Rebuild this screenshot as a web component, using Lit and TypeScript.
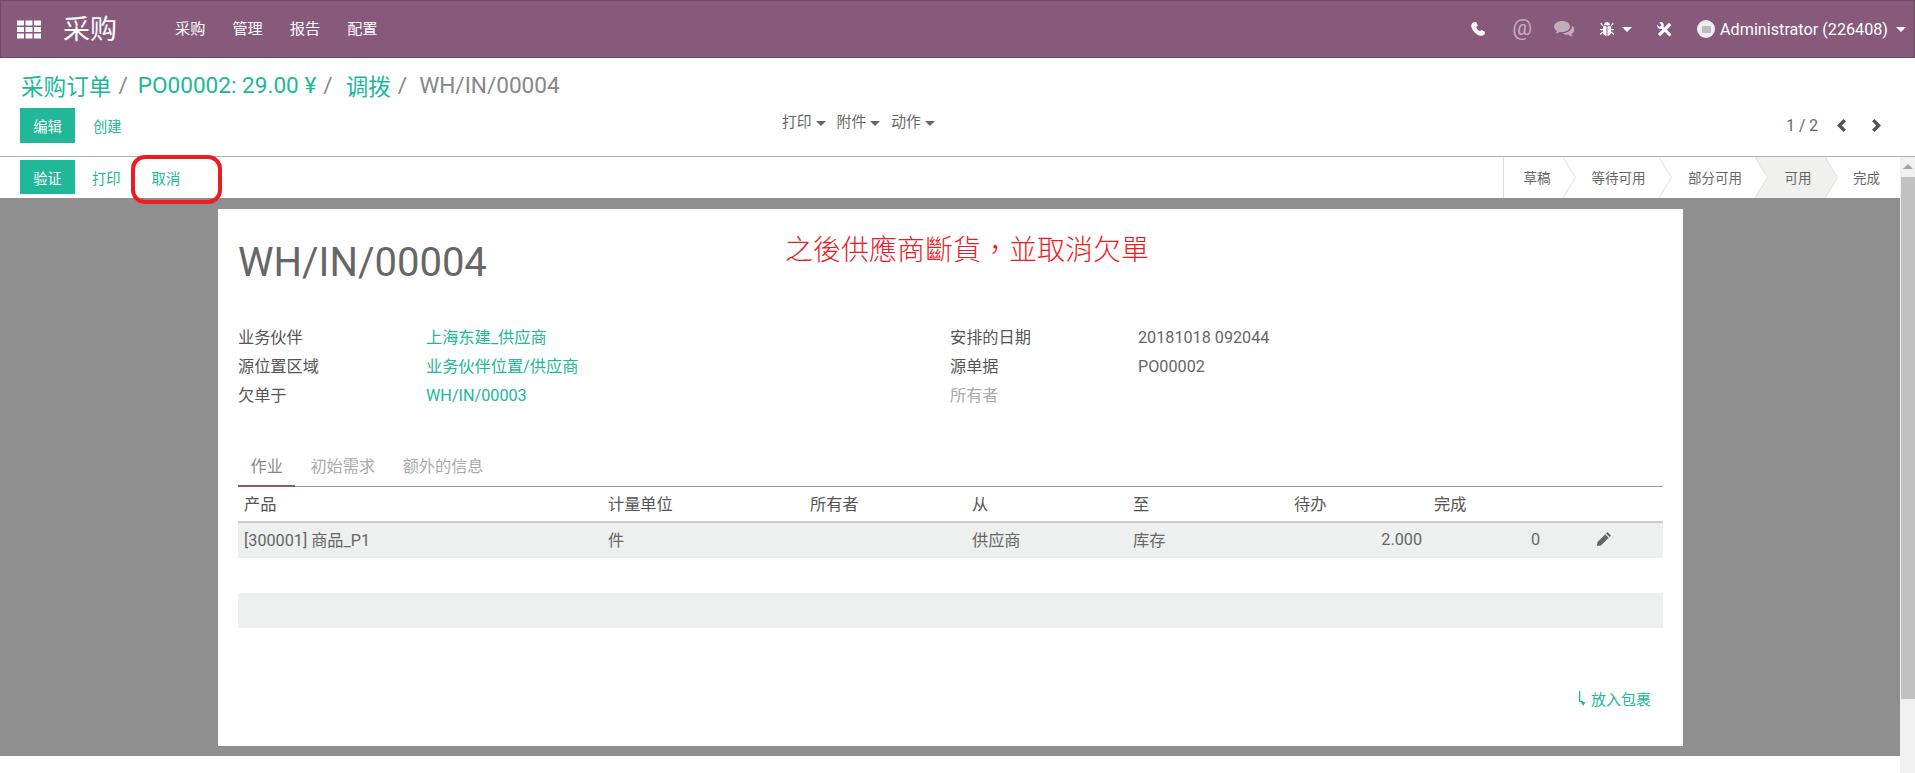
import { LitElement, html, css, svg } from 'lit';
import { customElement } from 'lit/decorators.js';

const STATES = [
  { label: '草稿', w: 60, pad: 7 },
  { label: '等待可用', w: 96, pad: 15 },
  { label: '部分可用', w: 96, pad: 16 },
  { label: '可用', w: 70, pad: 16, active: true },
  { label: '完成', w: 75, pad: 8, last: true },
];

const COLUMNS = [
  { label: '产品', w: 364 },
  { label: '计量单位', w: 202 },
  { label: '所有者', w: 162 },
  { label: '从', w: 161 },
  { label: '至', w: 161 },
  { label: '待办', w: 140 },
  { label: '完成', w: 225 },
];

@customElement('app-root')
export class AppRoot extends LitElement {
  static styles = css`
    :host {
      display: block;
      position: relative;
      height: 773px;
      overflow: hidden;
      background: #fff;
      color: #666;
      font: 16.2px Roboto, 'Noto Sans CJK SC', sans-serif;
    }
    a { color: #21b799; }

    .navbar {
      box-sizing: border-box;
      height: 58px;
      display: flex;
      align-items: center;
      background: #875a7b;
      border: 1px solid #6f4a65;
      color: #fff;
      padding-left: 16px;
    }
    .brand { font-size: 27px; margin-left: 22px; width: 112px; padding-bottom: 4px; }
    .menu { display: flex; gap: 27px; font-size: 15.2px; padding-bottom: 5px; }
    .systray { margin-left: auto; display: flex; align-items: center; color: #fff; }
    .systray svg { display: block; fill: currentColor; }
    .systray svg.tools { fill: none; stroke: currentColor; }
    .systray svg.tools path.head { fill: currentColor; stroke: none; }
    .dim { opacity: 0.5; }
    .at { font-size: 22px; margin-right: 22px; padding-bottom: 3px; }
    .caret {
      display: inline-block;
      border-top: 5px solid currentColor;
      border-left: 5px solid transparent;
      border-right: 5px solid transparent;
      margin-left: 6px;
      vertical-align: middle;
    }
    .user { display: flex; align-items: center; margin-left: 25px; margin-right: 8px; }
    .user .caret { margin-left: 8px; }
    .avatar {
      width: 18px;
      height: 18px;
      border-radius: 50%;
      background: #eee;
      margin-right: 5px;
      display: flex;
      align-items: center;
      justify-content: center;
    }
    .avatar i { width: 9px; height: 7px; background: #bbb; border-radius: 1px; display: block; }

    .control { height: 99px; box-sizing: border-box; padding: 0 20px; border-bottom: 1px solid #b0b0b0; }
    .crumbs {
      font-size: 22.6px;
      height: 50px;
      box-sizing: border-box;
      padding: 5px 0 0 1px;
      display: flex;
      align-items: center;
      white-space: pre;
      color: #888;
    }
    .crumbs a { color: #21b799; }
    .crumbs span { margin: 0 12px 0 7px; }
    .crumbs span:nth-of-type(1) { margin-right: 10px; }
    .crumbs span:nth-of-type(2) { margin-right: 13px; }
    .buttons { display: grid; grid-template-columns: 762px auto 1fr; align-items: center; }
    .left { display: flex; align-items: center; }
    .btn {
      background: #21b799;
      color: #fff;
      width: 55px;
      height: 35px;
      display: flex;
      align-items: center;
      justify-content: center;
      font-size: 14.3px;
    }
    .link { font-size: 14.3px; margin-left: 18px; color: #21b799; }
    .sidebar { display: flex; gap: 11px; font-size: 14.8px; color: #666; margin-top: -10px; }
    .sidebar .caret { margin-left: 4px; }
    .pager { display: flex; justify-content: flex-end; align-items: center; padding-right: 14px; font-size: 15.6px; }
    .pager svg { display: block; fill: #555; margin-left: 19px; }
    .pager svg + svg { margin-left: 26px; }

    .main { display: flex; height: 616px; }
    .content { flex: 1; display: flex; flex-direction: column; }
    .statusbar { height: 41px; flex: none; display: flex; padding-left: 20px; align-items: center; justify-content: space-between; }
    .statusbar .left { margin-top: -1px; }
    .statusbar .left .link { margin-left: 17px; }
    .statusbar .left .link.cancel { margin-left: 31px; }
    .statusbar .btn { height: 34px; }
    .states { display: flex; height: 41px; font-size: 13.5px; }
    .state { position: relative; display: flex; align-items: center; justify-content: center; box-sizing: border-box; padding-bottom: 2px; }
    .state:first-child { border-left: 1px solid #ddd; }
    .state svg { position: absolute; top: 0; right: -13px; z-index: 1; }
    .state.active { background: #f0f0ee; }

    .canvas { background: #8f8f8f; height: 558px; flex: none; display: flex; justify-content: center; padding-top: 11px; box-sizing: border-box; }
    .sheet { background: #fff; width: 1465px; height: 537px; box-sizing: border-box; padding: 0 20px; margin-left: 1px; }
    h1 { margin: 0; height: 114px; font-size: 40px; font-weight: 400; line-height: 107px; color: #666; }
    .groups { display: grid; grid-template-columns: 712px 1fr; height: 125px; }
    .field { display: grid; grid-template-columns: 188px 1fr; height: 29px; line-height: 29px; }
    .label { color: #555; }
    .muted { color: #aaa; }
    .tabs { display: flex; height: 36px; border-bottom: 1px solid #999; padding-top: 2px; box-sizing: content-box; }
    .tab { padding: 0 12.5px; line-height: 34px; color: #aaa; height: 36px; box-sizing: border-box; margin-right: 2.5px; }
    .tab.active { color: #888; border-bottom: 2px solid #875a7b; margin-bottom: -1px; height: 37px; }
    .thead { display: flex; height: 36px; align-items: center; border-bottom: 2px solid #ccc; padding: 0 0 2px 6px; color: #555; box-sizing: border-box; }
    .row { display: flex; height: 35px; align-items: center; background: #eeefef; padding: 0 0 3px 6px; position: relative; box-sizing: border-box; }
    .spacer { height: 35px; }
    .pack { display: flex; justify-content: flex-end; align-items: center; gap: 5px; margin-top: 60px; padding-right: 12px; color: #21b799; font-size: 15px; }

    .scroll { width: 15px; background: #f1f1f1; flex: none; position: relative; }
    .thumb { position: absolute; left: 1px; right: 0; top: 20px; height: 522px; background: #c1c1c1; }
    .up { position: absolute; left: 3px; top: 7px; border-bottom: 5px solid #a3a3a3; border-left: 5px solid transparent; border-right: 5px solid transparent; }

    .note { position: absolute; left: 785px; top: 228px; font: 300 28px 'Noto Sans CJK TC', serif; color: #ed1c24; white-space: nowrap; }
    .mark { position: absolute; left: 131px; top: 155px; width: 91px; height: 49px; box-sizing: border-box; border: 4px solid #ed1c24; border-radius: 14px; }
  `;

  private grid() {
    const cells = [];
    for (let y = 0; y < 3; y++) {
      for (let x = 0; x < 3; x++) {
        cells.push(svg`<rect x=${x * 8.5} y=${y * 6.5} width="7" height="5" />`);
      }
    }
    return html`<svg width="24" height="19" viewBox="0 0 24 18" fill="#fff">${cells}</svg>`;
  }

  render() {
    return html`
      <div class="navbar">
        ${this.grid()}
        <div class="brand">采购</div>
        <div class="menu"><span>采购</span><span>管理</span><span>报告</span><span>配置</span></div>
        <div class="systray">
          <svg width="14" height="14" viewBox="0 0 14 14" style="margin-right:27px"><path d="M3 .3 5.200 0l1.600 3.600-1.600 1.400c.6 1.800 2 3.400 3.800 4.200L10.500 8l3.300 1.700v2.300c-1 1.500-2.800 2.200-4.500 1.700C5 12.500 1.500 9 .3 4.700-.1 3 1 1 3 .3z"/></svg>
          <span class="dim at">@</span>
          <svg class="dim" width="21" height="16" viewBox="0 0 21 16" style="margin-right:25px"><path d="M8 0C3.600 0 0 2.500 0 5.600c0 1.800 1.200 3.400 3 4.400-.2.900-.7 1.800-1.300 2.500 1.500-.2 2.900-.9 4-1.800.7.100 1.500.200 2.300.200 4.400 0 8-2.500 8-5.500S12.400 0 8 0z"/><path d="M18 4.800c.2 3.900-3.500 7.200-9.200 7.600 1.500 1.100 3.500 1.500 5.600 1.300 1.200.9 2.700 1.600 4.300 1.800-.6-.7-1.100-1.600-1.300-2.500 3.500-1.900 4-6 .6-8.200z"/></svg>
          <svg width="14" height="14" viewBox="0 0 15 15"><path d="M4.200 3.500C4.400 1.300 5.800 0 7.500 0s3.100 1.300 3.300 3.500zM3.200 4.500H7V15C4.600 14.800 3.200 13.300 3.200 11zM8 4.500h3.800V11c0 2.300-1.400 3.800-3.800 4zM.3 1.500 1.300.8l2.300 3-1 .7zM14.700 1.500 13.700.8l-2.300 3 1 .7zM0 7.500h3v1.300H0zM12 7.500h3v1.300h-3zM.3 14l-1-.8 3.400-3 .8 1zM14.700 14l1-.8-3.400-3-.8 1z"/></svg>
          <span class="caret" style="margin-left:8px;margin-right:25px"></span>
          <svg class="tools" width="15" height="15" viewBox="0 0 15 15">
            <path d="M2 13.200 13.200 2" stroke-width="3.200" />
            <path d="M4.500 4.500 13.500 13.500" stroke-width="3" />
            <path class="head" d="M0 2.500 2.500 5 4.600 3.200 2.200.6 4 0C6 0 7.200 2 6.600 4L5.500 6 3.800 7C1.500 7.500-.3 5 0 2.500z" />
          </svg>
          <div class="user">
            <span class="avatar"><i></i></span>
            <span>Administrator (226408)</span><span class="caret"></span>
          </div>
        </div>
      </div>

      <div class="control">
        <div class="crumbs"><a>采购订单</a><span>/</span><a>PO00002: 29.00 ¥</a><span>/</span><a>调拨</a><span>/</span>WH/IN/00004</div>
        <div class="buttons">
          <div class="left"><div class="btn">编辑</div><span class="link">创建</span></div>
          <div class="sidebar">
            <span>打印<i class="caret"></i></span><span>附件<i class="caret"></i></span><span>动作<i class="caret"></i></span>
          </div>
          <div class="pager">
            <span>1 / 2</span>
            <svg width="9" height="13" viewBox="0 0 9 13"><path d="M6.500 0 9 2.200 4.800 6.500 9 10.800 6.500 13 0 6.500z"/></svg>
            <svg width="9" height="13" viewBox="0 0 9 13"><path d="M2.500 0 0 2.200 4.200 6.500 0 10.800 2.500 13 9 6.500z"/></svg>
          </div>
        </div>
      </div>

      <div class="main">
        <div class="content">
          <div class="statusbar">
            <div class="left"><div class="btn">验证</div><span class="link">打印</span><span class="link cancel">取消</span></div>
            <div class="states">
              ${STATES.map(
                (s) => html`<div class="state ${s.active ? 'active' : ''}" style="width:${s.w}px;padding-left:${s.pad}px">
                  ${s.label}
                  ${s.last
                    ? ''
                    : html`<svg width="13" height="41" viewBox="0 0 13 41">
                        <path d="M0 0 12.500 20.500 0 41z" fill=${s.active ? '#f0f0ee' : '#fff'} />
                        <path d="M0 0 12.500 20.500 0 41" fill="none" stroke="#ddd" />
                      </svg>`}
                </div>`
              )}
            </div>
          </div>
          <div class="canvas">
            <div class="sheet">
              <h1>WH/IN/00004</h1>
              <div class="groups">
                <div>
                  <div class="field"><span class="label">业务伙伴</span><a>上海东建_供应商</a></div>
                  <div class="field"><span class="label">源位置区域</span><a>业务伙伴位置/供应商</a></div>
                  <div class="field"><span class="label">欠单于</span><a>WH/IN/00003</a></div>
                </div>
                <div>
                  <div class="field"><span class="label">安排的日期</span><span>20181018 092044</span></div>
                  <div class="field"><span class="label">源单据</span><span>PO00002</span></div>
                  <div class="field"><span class="muted">所有者</span></div>
                </div>
              </div>
              <div class="tabs">
                <div class="tab active">作业</div><div class="tab">初始需求</div><div class="tab">额外的信息</div>
              </div>
              <div class="thead">
                ${COLUMNS.map((c) => html`<span style="width:${c.w}px">${c.label}</span>`)}
              </div>
              <div class="row">
                ${['[300001] 商品_P1', '件', '', '供应商', '库存'].map(
                  (t, i) => html`<span style="width:${COLUMNS[i].w}px">${t}</span>`
                )}
                <span style="width:128px;text-align:right">2.000</span>
                <span style="width:118px;text-align:right">0</span>
                <svg style="margin-left:57px" width="14" height="14" viewBox="0 0 14 14" fill="#666"><path d="M10.500 0 14 3.500l-1.500 1.500L9 1.500zM8.200 2.300l3.500 3.500L4 13.500.5 14 0 13.500l.5-3.500z"/></svg>
              </div>
              <div class="spacer"></div>
              <div class="row"></div>
              <div class="pack">
                <svg width="8" height="15" viewBox="0 0 8 15" fill="#21b799"><path d="M1 0h1.300v9.700H5V11H1zM2.800 11h4.700L5.200 15z"/></svg>
                放入包裹
              </div>
            </div>
          </div>
        </div>
        <div class="scroll"><div class="up"></div><div class="thumb"></div></div>
      </div>

      <div class="note">之後供應商斷貨，並取消欠單</div>
      <div class="mark"></div>
    `;
  }
}
